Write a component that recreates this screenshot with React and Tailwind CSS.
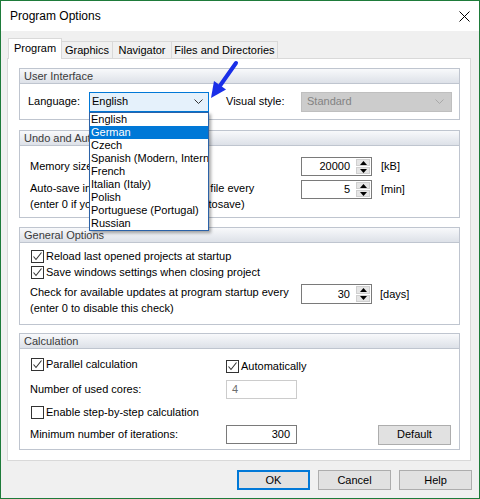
import React from "react";

function Chevron({ color = "#333" }) {
  return (
    <svg width="9" height="5" viewBox="0 0 9 5">
      <path d="M0.5 0.5 L4.5 4.5 L8.5 0.5" fill="none" stroke={color} strokeWidth="1" />
    </svg>
  );
}

function SpinButtons() {
  return (
    <div className="w-[16px] flex flex-col p-px gap-px">
      <div className="flex-1 bg-[#e5e5e5] border border-[#cfcfcf] flex items-center justify-center">
        <svg width="7" height="4" viewBox="0 0 7 4"><path d="M0 4 L3.5 0 L7 4 Z" fill="#000" /></svg>
      </div>
      <div className="flex-1 bg-[#e5e5e5] border border-[#cfcfcf] flex items-center justify-center">
        <svg width="7" height="4" viewBox="0 0 7 4"><path d="M0 0 L3.5 4 L7 0 Z" fill="#000" /></svg>
      </div>
    </div>
  );
}

function Spin({ value, tall }) {
  return (
    <div className={`w-[71px] ${tall ? "h-[20px]" : "h-[19px]"} border border-[#7a7a7a] bg-white flex shrink-0`}>
      <div className={`flex-1 text-right pr-[5px] ${tall ? "leading-[18px]" : "leading-[17px]"}`}>{value}</div>
      <SpinButtons />
    </div>
  );
}

function Check({ checked, label }) {
  return (
    <div className="flex items-center h-[16px]">
      <div className="w-[13px] h-[13px] border border-[#333] bg-white flex items-center justify-center shrink-0">
        {checked && (
          <svg width="11" height="11" viewBox="0 0 11 11">
            <path d="M1.5 5.5 L4 8.5 L9.5 1.5" fill="none" stroke="#333" strokeWidth="1.1" />
          </svg>
        )}
      </div>
      <span className="ml-[2px] whitespace-nowrap">{label}</span>
    </div>
  );
}

function Group({ title, h, mt, children }) {
  return (
    <div className={`w-[441px] border border-[#bfc5cf] flex flex-col ${h} ${mt}`}>
      <div className="h-[15px] shrink-0 bg-gradient-to-b from-[#f8f9fb] to-[#dde1e8] border-b border-[#bfc5cf] pl-[4px] leading-[14px] text-[#3a3a3a] whitespace-nowrap">
        {title}
      </div>
      <div className="flex-1 relative">{children}</div>
    </div>
  );
}

const languages = [
  "English",
  "German",
  "Czech",
  "Spanish (Modern, International Sort)",
  "French",
  "Italian (Italy)",
  "Polish",
  "Portuguese (Portugal)",
  "Russian",
];

function Btn({ children, primary, w = "w-[73px]" }) {
  return (
    <div
      className={`${w} h-[20px] flex items-center justify-center bg-[#e1e1e1] ${
        primary ? "border-2 border-[#0078d7]" : "border border-[#adadad]"
      }`}
    >
      {children}
    </div>
  );
}

export default function App() {
  return (
    <div className="w-[480px] h-[499px] border border-[#1e7b3a] bg-[#f0f0f0] flex flex-col relative font-['Liberation_Sans',Arial,sans-serif] text-[11px] text-black">
      {/* Title bar */}
      <div className="h-[30px] bg-white flex items-center justify-between pl-[9px] pr-[9px] shrink-0">
        <span className="text-[12px]">Program Options</span>
        <svg width="11" height="11" viewBox="0 0 11 11">
          <path d="M0.5 0.5 L10.5 10.5 M10.5 0.5 L0.5 10.5" stroke="#000" strokeWidth="1" />
        </svg>
      </div>

      <div className="flex-1 pl-[6px] pr-[8px] pt-[7px] flex flex-col">
        {/* Tabs */}
        <div className="flex items-end h-[20px] pl-[1px]">
          <div className="relative z-10 h-[21px] -mb-px w-[54px] bg-white border border-b-0 border-[#d9d9d9] flex items-center justify-center pb-[1px]">
            Program
          </div>
          <div className="h-[17px] w-[51px] border border-l-0 border-b-0 border-[#d9d9d9] flex items-center justify-center">
            Graphics
          </div>
          <div className="h-[17px] w-[59px] border border-l-0 border-b-0 border-[#d9d9d9] flex items-center justify-center">
            Navigator
          </div>
          <div className="h-[17px] w-[106px] border border-l-0 border-b-0 border-[#d9d9d9] flex items-center justify-center whitespace-nowrap">
            Files and Directories
          </div>
        </div>

        {/* Panel */}
        <div className="w-[464px] h-[403px] bg-white border border-[#d9d9d9] pl-[11px] flex flex-col">
          <div className="relative z-20">
            <Group title="User Interface" h="h-[52px]" mt="mt-[9px]">
              <div className="h-[35px] flex items-center pl-[8px]">
                <div className="w-[61px]">Language:</div>
                <div className="relative">
                  <div className="w-[120px] h-[20px] bg-[#e5f1fb] border border-[#0078d7] flex items-center justify-between pl-[2px] pr-[5px]">
                    <span>English</span>
                    <Chevron />
                  </div>
                  <div className="absolute left-0 top-[20px] w-[120px] bg-white border border-[#2b62a8] shadow-[2px_2px_3px_rgba(0,0,0,0.35)] overflow-hidden">
                    {languages.map((l) => (
                      <div
                        key={l}
                        className={`h-[13px] leading-[13px] pl-[1px] whitespace-nowrap overflow-hidden ${
                          l === "German" ? "bg-[#0078d7] text-white" : ""
                        }`}
                      >
                        {l}
                      </div>
                    ))}
                  </div>
                </div>
                <div className="w-[75px] ml-[17px]">Visual style:</div>
                <div className="w-[151px] h-[20px] bg-[#cccccc] border border-[#bfbfbf] flex items-center justify-between pl-[5px] pr-[7px] text-[#838383]">
                  <span>Standard</span>
                  <Chevron color="#a8a8a8" />
                </div>
              </div>
            </Group>
          </div>

          <Group title="Undo and Autosave" h="h-[88px]" mt="mt-[10px]">
            <div className="pl-[10px] pt-[11px] flex flex-col">
              <div className="flex items-center h-[19px]">
                <div className="w-[271px] whitespace-nowrap">Memory size for undo buffer:</div>
                <Spin value="20000" />
                <div className="ml-[9px]">[kB]</div>
              </div>
              <div className="flex items-start mt-[4px]">
                <div className="w-[271px] leading-[16px] whitespace-nowrap">
                  <div>Auto-save interval for current project file every</div>
                  <div>(enter 0 if you do not want to take autosave)</div>
                </div>
                <Spin value="5" />
                <div className="ml-[9px] leading-[19px]">[min]</div>
              </div>
            </div>
          </Group>

          <Group title="General Options" h="h-[98px]" mt="mt-[9px]">
            <div className="pl-[11px] pt-[5px] flex flex-col">
              <Check checked label="Reload last opened projects at startup" />
              <Check checked label="Save windows settings when closing project" />
              <div className="flex items-start mt-[4px] -ml-px">
                <div className="w-[271px] leading-[16px] whitespace-nowrap">
                  <div>Check for available updates at program startup every</div>
                  <div>(enter 0 to disable this check)</div>
                </div>
                <Spin value="30" tall />
                <div className="ml-[8px] leading-[20px]">[days]</div>
              </div>
            </div>
          </Group>

          <Group title="Calculation" h="h-[117px]" mt="mt-[8px]">
            <div className="pl-[11px] flex flex-col">
              <div className="flex items-start mt-[7px]">
                <div className="w-[195px]">
                  <Check checked label="Parallel calculation" />
                </div>
                <div className="mt-[2px]">
                  <Check checked label="Automatically" />
                </div>
              </div>
              <div className="flex items-center mt-[6px] h-[19px] -ml-px">
                <div className="w-[196px]">Number of used cores:</div>
                <div className="w-[71px] h-[19px] border border-[#cccccc] bg-white pl-[5px] leading-[17px] text-[#6d6d6d]">4</div>
              </div>
              <div className="mt-[5px]">
                <Check label="Enable step-by-step calculation" />
              </div>
              <div className="flex items-center mt-[4px] h-[21px] -ml-px">
                <div className="w-[196px]">Minimum number of iterations:</div>
                <div className="w-[71px] h-[19px] border border-[#7a7a7a] bg-white pr-[6px] text-right leading-[17px]">300</div>
                <div className="ml-[81px]">
                  <Btn>Default</Btn>
                </div>
              </div>
            </div>
          </Group>
        </div>

        {/* Bottom buttons */}
        <div className="flex justify-end gap-[8px] mt-[9px] -mr-px">
          <Btn primary>OK</Btn>
          <Btn>Cancel</Btn>
          <Btn>Help</Btn>
        </div>
      </div>

      {/* Annotation arrow */}
      <svg className="absolute left-0 top-0 pointer-events-none z-30" width="480" height="499" viewBox="0 0 480 499">
        <line x1="235" y1="62" x2="219.5" y2="84" stroke="#1a2fe8" strokeWidth="4" strokeLinecap="round" />
        <polygon points="210,97 225,88.5 213,80" fill="#1a2fe8" />
      </svg>
    </div>
  );
}
